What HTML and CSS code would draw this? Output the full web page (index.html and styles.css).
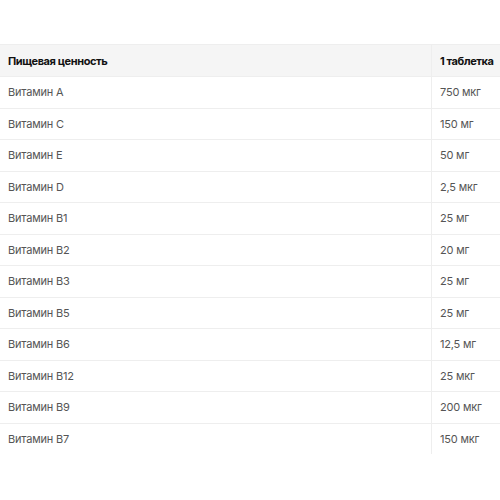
FILE: index.html
```html
<!DOCTYPE html>
<html lang="ru">
<head>
<meta charset="utf-8">
<link rel="stylesheet" href="styles.css">
</head>
<body>
<div class="wrap">
<table class="nutri">
  <thead>
    <tr><th class="name">Пищевая ценность</th><th class="val">1 таблетка</th></tr>
  </thead>
  <tbody>
    <tr><td class="name">Витамин A</td><td class="val">750 мкг</td></tr>
    <tr><td class="name">Витамин C</td><td class="val">150 мг</td></tr>
    <tr><td class="name">Витамин E</td><td class="val">50 мг</td></tr>
    <tr><td class="name">Витамин D</td><td class="val">2,5 мкг</td></tr>
    <tr><td class="name">Витамин B1</td><td class="val">25 мг</td></tr>
    <tr><td class="name">Витамин B2</td><td class="val">20 мг</td></tr>
    <tr><td class="name">Витамин B3</td><td class="val">25 мг</td></tr>
    <tr><td class="name">Витамин B5</td><td class="val">25 мг</td></tr>
    <tr><td class="name">Витамин B6</td><td class="val">12,5 мг</td></tr>
    <tr><td class="name">Витамин B12</td><td class="val">25 мкг</td></tr>
    <tr><td class="name">Витамин B9</td><td class="val">200 мкг</td></tr>
    <tr><td class="name">Витамин B7</td><td class="val">150 мкг</td></tr>
  </tbody>
</table>
</div>
</body>
</html>
```
FILE: styles.css
```css
html, body {
  margin: 0;
  padding: 0;
  background: #fff;
}
.wrap {
  padding-top: 44px;
}
.nutri {
  width: 100%;
  border-collapse: collapse;
  font-family: Inter, "Noto Sans", sans-serif;
  font-size: 11px;
  table-layout: fixed;
}
.nutri th, .nutri td {
  text-align: left;
  padding: 0 0 0 8px;
  height: 30.5px;
  white-space: nowrap;
  border-top: 1px solid #eeeeee;
}
.nutri thead th {
  height: 31px;
  background: #f5f5f5;
  color: #111;
  font-weight: 700;
  letter-spacing: -0.4px;
}
.nutri td {
  color: #555;
  letter-spacing: -0.2px;
}
.nutri .val {
  width: 60px;
  border-left: 1px solid #eeeeee;
}
```
